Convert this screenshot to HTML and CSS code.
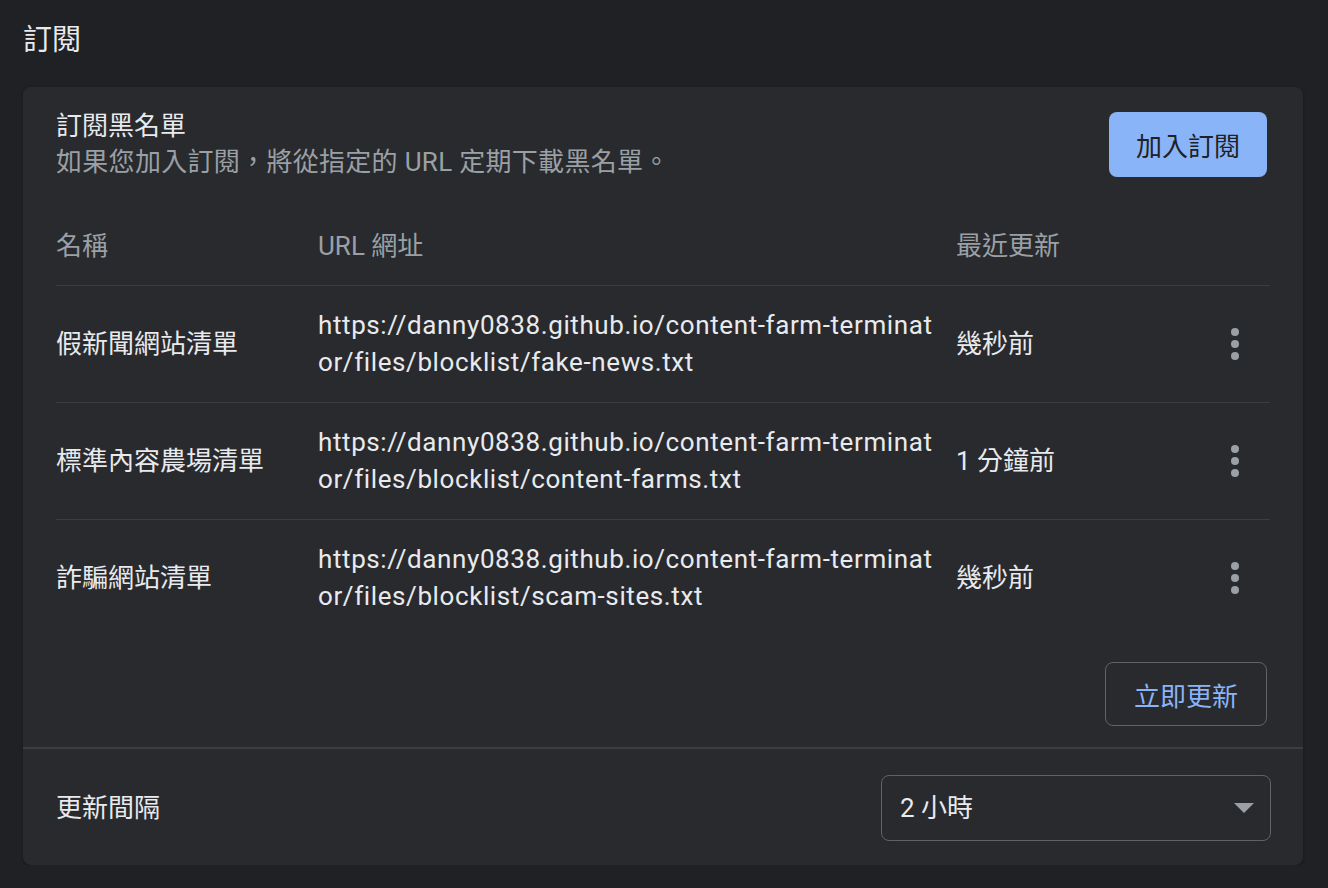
FILE: index.html
```html
<!DOCTYPE html>
<html lang="zh-Hant">
<head>
    <meta charset="UTF-8">
    <meta name="viewport" content="width=device-width, initial-scale=1.0">
    <title>訂閱</title>
    <link rel="stylesheet" href="styles.css">
</head>
<body>
    <h2 class="section-title">訂閱</h2>

    <div class="card">
        <div class="card-header">
            <div class="card-text">
                <div class="card-title">訂閱黑名單</div>
                <div class="card-sub">如果您加入訂閱，將從指定的 URL 定期下載黑名單。</div>
            </div>
            <button class="btn-primary">加入訂閱</button>
        </div>

        <div class="list">
            <div class="row head">
                <div>名稱</div>
                <div>URL 網址</div>
                <div>最近更新</div>
                <div></div>
            </div>
            <div class="row">
                <div>假新聞網站清單</div>
                <div class="url">https://danny0838.github.io/content-farm-terminator/files/blocklist/fake-news.txt</div>
                <div>幾秒前</div>
                <div class="menu"><span></span><span></span><span></span></div>
            </div>
            <div class="row">
                <div>標準內容農場清單</div>
                <div class="url">https://danny0838.github.io/content-farm-terminator/files/blocklist/content-farms.txt</div>
                <div>1 分鐘前</div>
                <div class="menu"><span></span><span></span><span></span></div>
            </div>
            <div class="row">
                <div>詐騙網站清單</div>
                <div class="url">https://danny0838.github.io/content-farm-terminator/files/blocklist/scam-sites.txt</div>
                <div>幾秒前</div>
                <div class="menu"><span></span><span></span><span></span></div>
            </div>
        </div>

        <div class="actions">
            <button class="btn-outline">立即更新</button>
        </div>

        <div class="card-footer">
            <div>更新間隔</div>
            <div class="select">
                <span>2 小時</span>
                <svg width="20" height="10" viewBox="0 0 20 10"><path d="M0 0h20L10 10z" fill="#9aa0a6"/></svg>
            </div>
        </div>
    </div>
</body>
</html>
```

FILE: styles.css
```css
body {
    margin: 0;
    padding: 22px 25px 0 23px;
    background-color: #202124;
    color: #e8eaed;
    font-family: Roboto, "Noto Sans CJK TC", sans-serif;
    font-size: 26px;
    line-height: 36px;
}

.section-title {
    margin: 0 0 29px;
    font-size: 29px;
    font-weight: 400;
    line-height: 36px;
}

.card {
    background-color: #292a2d;
    border-radius: 8px;
    box-shadow: 0 1px 3px rgba(0,0,0,0.35);
}

.card-header {
    display: flex;
    justify-content: space-between;
    align-items: flex-start;
    padding: 21px 36px 0 33px;
}

.card-sub {
    color: #9aa0a6;
    letter-spacing: 0.3px;
}

button {
    font-family: inherit;
    font-size: 26px;
    border-radius: 8px;
    cursor: pointer;
}

.btn-primary {
    margin-top: 4px;
    height: 65px;
    padding: 0 27px;
    border: none;
    background-color: #8ab4f8;
    color: #202124;
}

.list {
    margin: 28px 33px 0;
}

.row {
    display: grid;
    grid-template-columns: 262px 638px 1fr 70px;
    align-items: center;
    padding: 21px 0;
    line-height: 37px;
    border-top: 1px solid #3c3d40;
}

.row.head {
    padding: 20px 0;
    border-top: none;
    color: #9aa0a6;
}

.url {
    padding-right: 16px;
    letter-spacing: 0.6px;
    word-break: break-all;
}

.menu {
    display: flex;
    flex-direction: column;
    align-items: center;
    gap: 4px;
}

.menu span {
    width: 8px;
    height: 8px;
    border-radius: 50%;
    background-color: #9aa0a6;
}

.actions {
    display: flex;
    justify-content: flex-end;
    padding: 26px 36px 21px;
}

.btn-outline {
    height: 64px;
    padding: 0 28px;
    border: 1px solid #5f6368;
    background-color: transparent;
    color: #8ab4f8;
}

.card-footer {
    display: flex;
    justify-content: space-between;
    align-items: center;
    padding: 26px 32px 24px 33px;
    border-top: 2px solid #3c3d40;
}

.select {
    box-sizing: border-box;
    width: 390px;
    height: 66px;
    display: flex;
    justify-content: space-between;
    align-items: center;
    padding: 0 16px 0 18px;
    border: 1px solid #5f6368;
    border-radius: 8px;
}
```
